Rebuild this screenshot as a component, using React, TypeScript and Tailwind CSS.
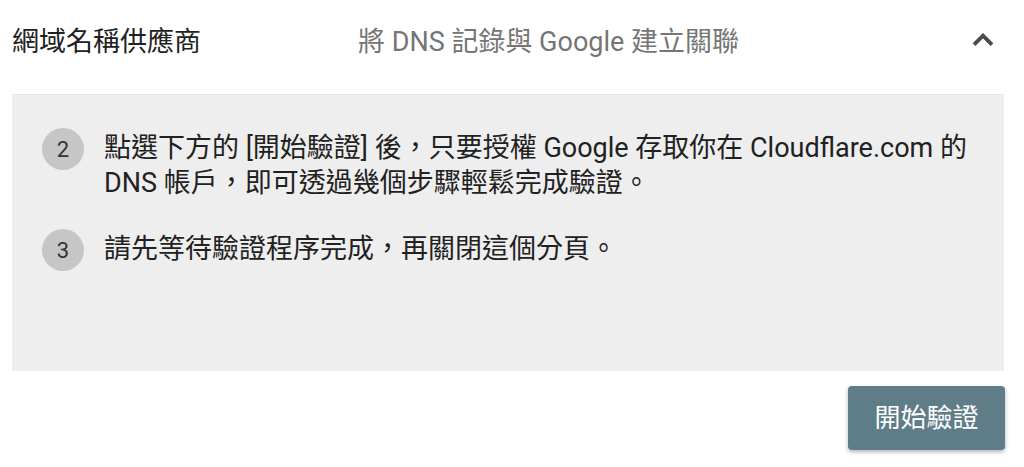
import React from "react";

const font = "font-['Roboto','Noto_Sans_CJK_TC',sans-serif]";

function Step({ n, children }: { n: string; children: React.ReactNode }) {
  return (
    <div className="flex items-start">
      <div className="flex h-[42px] w-[42px] shrink-0 items-center justify-center rounded-full bg-[#c6c6c6] text-[22px] leading-none text-[#333] mt-[-3.5px] pt-[2px]">
        {n}
      </div>
      <div className="ml-[20px] text-[27px] leading-[35px] text-[#212121]">{children}</div>
    </div>
  );
}

export default function App() {
  return (
    <div className={`w-[1024px] h-[467px] bg-white pl-3 pr-5 ${font}`}>
      <div className="flex h-[94px] items-center pb-[10px]">
        <div className="w-[346px] text-[27px] text-[#212121]">網域名稱供應商</div>
        <div className="flex-1 text-[27px] text-[#757575]">將 DNS 記錄與 Google 建立關聯</div>
        <svg width="40" height="40" viewBox="0 0 24 24" className="mr-[1px] mt-[-4px]">
          <path d="M12 8l-6 6 1.41 1.41L12 10.83l4.59 4.58L18 14z" fill="#4a4a4a" stroke="#4a4a4a" strokeWidth="0.4" />
        </svg>
      </div>
      <div className="h-[277px] border-t border-[#e6e6e6] bg-[#eeeeee] pl-[30px] pt-[36px] pr-4 flex flex-col gap-[31px]">
        <Step n="2">
          點選下方的 [開始驗證] 後，只要授權 Google 存取你在 Cloudflare.com 的
          <br />
          DNS 帳戶，即可透過幾個步驟輕鬆完成驗證。
        </Step>
        <Step n="3">請先等待驗證程序完成，再關閉這個分頁。</Step>
      </div>
      <div className="flex justify-end pt-[15px]">
        <button className="h-[64px] w-[157px] rounded-[4px] bg-[#5f7c89] text-[26px] text-white shadow-[0_2px_4px_rgba(0,0,0,0.3)] mr-[-1px]">
          開始驗證
        </button>
      </div>
    </div>
  );
}
